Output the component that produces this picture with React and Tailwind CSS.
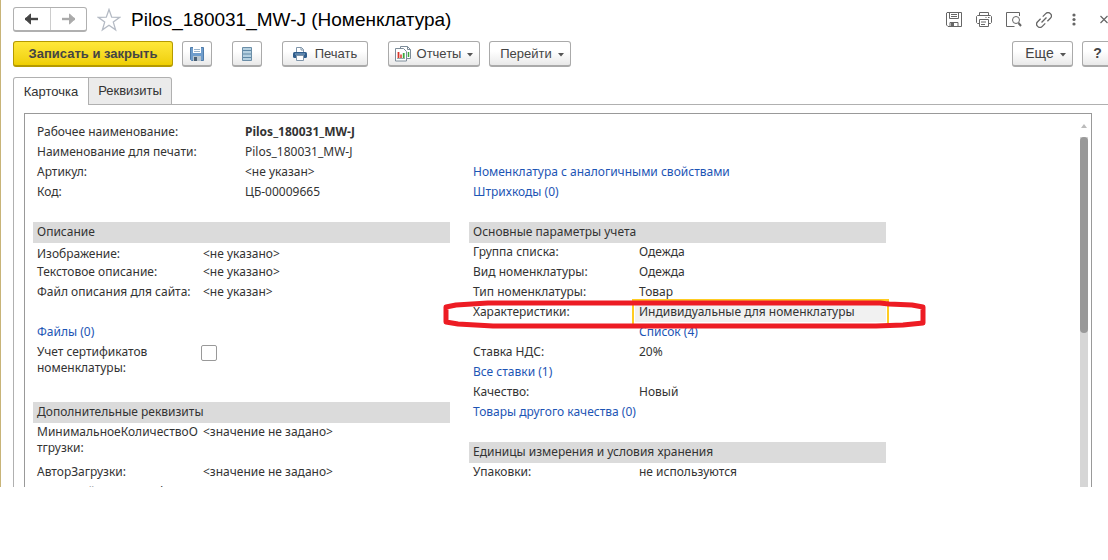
import React from "react";
import clsx from "clsx";

const topFields = [
  { label: "Рабочее наименование:", value: "Pilos_180031_MW-J", bold: true },
  { label: "Наименование для печати:", value: "Pilos_180031_MW-J" },
  { label: "Артикул:", value: "<не указан>" },
  { label: "Код:", value: "ЦБ-00009665" },
];

const buttonLook = "border-[#aaa] from-white from-40% to-[#e9e9e9] text-[#444]";
const primaryLook = "border-[#b59a00] from-[#ffe838] to-[#efcf00] font-bold text-[#444]";

function ToolButton({ primary, className, children, ...props }) {
  return (
    <button
      type="button"
      className={clsx(
        "flex h-[26px] shrink-0 items-center justify-center rounded-[3px] border border-b-2 bg-linear-to-b",
        primary ? primaryLook : buttonLook,
        className
      )}
      {...props}
    >
      {children}
    </button>
  );
}

function Caret() {
  return (
    <svg width="6" height="4" viewBox="0 0 6 4" className="mt-0.5 shrink-0" aria-hidden="true">
      <path d="M0 0h6L3 3.500z" fill="#555" />
    </svg>
  );
}

function Arrow({ color, back }) {
  return (
    <svg width="15" height="12" viewBox="0 0 15 12" className={back ? "" : "-scale-x-100"} aria-hidden="true">
      <path d="M1 6h13" stroke={color} strokeWidth="2.4" />
      <path d="M6.500 1 1.200 6l5.300 5V6z" fill={color} stroke={color} strokeWidth="1" strokeLinejoin="round" />
    </svg>
  );
}

function StarIcon() {
  return (
    <svg width="24" height="24" viewBox="0 0 24 24" fill="none" stroke="#b4bac4" strokeWidth="1.300" aria-hidden="true">
      <path d="M12 1.500l2.700 7.600 8 .2-6.400 4.800 2.300 7.700-6.600-4.600-6.600 4.600 2.300-7.700L1.300 9.300l8-.2z" />
    </svg>
  );
}

function FloppyIcon() {
  return (
    <svg width="14" height="14" viewBox="0 0 14 14" aria-hidden="true">
      <path d="M.5.5h13v13h-12l-1-1z" fill="#6f9dcc" stroke="#4f7cab" />
      <path d="M3 0h8v6H3z" fill="#fff" />
      <path d="M4 2.500h6M4 4.500h6" stroke="#9ab4cc" />
      <path d="M3 9h8v5H3z" fill="#b9c6cf" />
      <path d="M4 10h3v4H4z" fill="#4a5f73" />
    </svg>
  );
}

function ListIcon() {
  return (
    <svg width="10" height="14" viewBox="0 0 10 14" aria-hidden="true">
      <path d="M.5.5h9v13h-9z" fill="#b5d0e0" stroke="#6b8ea8" />
      <path d="M1 3.500h8M1 7h8M1 10.500h8" stroke="#5f88a6" />
    </svg>
  );
}

function PrinterIcon() {
  return (
    <svg width="14" height="14" viewBox="0 0 14 14" aria-hidden="true">
      <path d="M3.500 5V.5h5l2 2V5" fill="#fff" stroke="#7f95aa" />
      <path d="M8 .5V3h2.500" fill="none" stroke="#7f95aa" />
      <rect y="5" width="14" height="6" rx="1.500" fill="#2f5d8c" />
      <path d="M2 7h10" stroke="#8fb0cc" />
      <path d="M3.500 8.500h7v5h-7z" fill="#fff" stroke="#7f95aa" />
    </svg>
  );
}

function ReportIcon() {
  return (
    <svg width="16" height="16" viewBox="0 0 16 16" aria-hidden="true">
      <path d="M5.500.5h7l3 3v9h-10z" fill="#fff" stroke="#7d8c99" />
      <path d="M12.500.5v3h3" fill="none" stroke="#7d8c99" />
      <path d="M13.500 6v5" stroke="#3aa83a" strokeWidth="1.500" />
      <path d="M.5 2.500h8l3 3v9.500h-11z" fill="#fff" stroke="#7d8c99" />
      <path d="M3.500 6v6" stroke="#d9362b" strokeWidth="1.800" />
      <path d="M6 8.500V12" stroke="#d9362b" strokeWidth="1.500" />
      <path d="M8.700 7v5" stroke="#3aa83a" strokeWidth="1.800" />
      <path d="M2 12.500h8" stroke="#9aa" />
    </svg>
  );
}

const windowActions = [
  {
    title: "Сохранить",
    icon: (
      <>
        <path d="M1 .5h14.500v14H2L.5 13V1z" />
        <path d="M3.500.5v6h9v-6M5 2.500h6M5 4.500h6M4 14.500v-4h8v4" />
        <path d="M5 11h3v3H5z" fill="#666" stroke="none" />
      </>
    ),
  },
  {
    title: "Печать",
    icon: (
      <>
        <path d="M3.500 3.500v-3h9v3M3.500 11.500h-2l-1-1v-6l1-1h13l1 1v6l-1 1h-2" />
        <path d="M3.500 7.500h9v7h-9zM5 10h5M5 12.500h4M9.500 5.500h1M12 5.500h1.500" />
      </>
    ),
  },
  {
    title: "Просмотр",
    icon: (
      <>
        <path d="M13.500 4V.5H.5v14h8" />
        <circle cx="10" cy="8" r="3.500" />
        <path d="M12.500 11l2.500 3" strokeWidth="2" />
      </>
    ),
  },
  {
    title: "Получить ссылку",
    icon: (
      <g transform="rotate(-45 8 8)" strokeWidth="1.300">
        <path d="M6.500 4.700H2.300a3.300 3.300 0 0 0 0 6.600h4.200M9.500 4.700h4.200a3.300 3.300 0 0 1 0 6.600H9.500M4.500 8h7" />
      </g>
    ),
  },
  {
    title: "Еще действия",
    icon: (
      <g fill="#666" stroke="none">
        <circle cx="8" cy="3" r="1.600" />
        <circle cx="8" cy="7.500" r="1.600" />
        <circle cx="8" cy="12" r="1.600" />
      </g>
    ),
  },
  { title: "Закрыть", icon: <path d="M4.500 4l7 7M11.500 4l-7 7" strokeWidth="1.200" /> },
];

function SectionTitle({ children }) {
  return <h2 className="-mb-px h-[21px] bg-[#dbdbdb] px-1 leading-5">{children}</h2>;
}

function Row({ label, children, className }) {
  return (
    <div className={clsx("flex min-h-5 px-1", className)}>
      <span className="w-[166px] shrink-0">{label}</span>
      <span>{children}</span>
    </div>
  );
}

function Link({ children }) {
  return <a href="#" className="text-[#1d55b5]">{children}</a>;
}

// hand-drawn marker around the "Характеристики" row
function Marker() {
  return (
    <svg
      width="484"
      height="32"
      viewBox="0 0 484 32"
      className="pointer-events-none absolute -top-0.5 -left-[26px] z-10"
      fill="none"
      stroke="#ed1c24"
      strokeWidth="5"
      strokeLinejoin="round"
      aria-hidden="true"
    >
      <path d="M3 7l10-2 32-2h392l9 1 23 1 11 2v16l-20 2-27 1H50l-35-2-12-2z" />
    </svg>
  );
}

export default function App() {
  return (
    <div className="overflow-hidden bg-white font-['Liberation_Sans',Arial,sans-serif] text-[13px]">
      <div className="border-l border-[#c8b478] pl-3">
        <header className="-mr-1 flex h-[41px] items-center pb-0.5">
          <div className="flex h-[25px] w-[74px] rounded-[3px] border border-b-2 border-[#b0b0b0]">
            <button type="button" aria-label="Назад" className="flex flex-1 items-center justify-center border-r border-[#ccc]">
              <Arrow color="#444" back />
            </button>
            <button type="button" aria-label="Вперед" className="flex flex-1 items-center justify-center">
              <Arrow color="#aaa" />
            </button>
          </div>
          <button type="button" aria-label="В избранное" className="ml-2.5">
            <StarIcon />
          </button>
          <h1 className="ml-2.5 flex-1 text-[19px] leading-6 whitespace-nowrap text-black">Pilos_180031_MW-J (Номенклатура)</h1>
          <div className="flex gap-3.5">
            {windowActions.map((a) => (
              <button key={a.title} type="button" aria-label={a.title}>
                <svg width="16" height="16" viewBox="0 0 16 16" fill="none" stroke="#666">
                  {a.icon}
                </svg>
              </button>
            ))}
          </div>
        </header>

        <div className="-mr-[5px] flex">
          <ToolButton primary className="w-40">Записать и закрыть</ToolButton>
          <ToolButton className="ml-[9px] w-[30px]" aria-label="Записать"><FloppyIcon /></ToolButton>
          <ToolButton className="ml-5 w-[30px]" aria-label="Список"><ListIcon /></ToolButton>
          <ToolButton className="ml-5 w-[86px] gap-2"><PrinterIcon />Печать</ToolButton>
          <ToolButton className="ml-5 w-[92px] gap-1.5"><ReportIcon />Отчеты<Caret /></ToolButton>
          <ToolButton className="ml-[9px] w-[82px] gap-1.5 pl-1">Перейти<Caret /></ToolButton>
          <ToolButton className="ml-auto w-[61px] gap-1.5 pl-1.5 text-[14px]">Еще<Caret /></ToolButton>
          <ToolButton className="ml-[9px] w-[31px] text-[14px] font-bold" aria-label="Справка">?</ToolButton>
        </div>

        <div role="tablist" className="mt-2.5 flex h-7 text-[#333]">
          <button type="button" role="tab" aria-selected="true" className="w-[76px] rounded-tl-[3px] border border-b-0 border-[#b0b0b0] bg-white">
            Карточка
          </button>
          <button type="button" role="tab" aria-selected="false" className="w-[83px] rounded-tr-[3px] border border-l-0 border-[#b0b0b0] bg-[#ebebeb]">
            Реквизиты
          </button>
          <div className="flex-1 border-b border-[#b0b0b0]" />
        </div>

        <div className="border-l border-[#b0b0b0] pt-2 pr-4 pl-2.5">
          <main className="flex border border-b-0 border-[#999] pt-2 pl-2 font-['Noto_Sans',Tahoma,sans-serif] text-[12px] leading-5 text-[#333]">
            <div className="grid max-w-[853px] flex-1 grid-cols-2 gap-x-[19px]">
              <div className="mb-5 px-1">
                {topFields.map((f) => (
                  <div key={f.label} className="flex">
                    <span className="w-52 shrink-0">{f.label}</span>
                    <span className={f.bold ? "font-bold" : ""}>{f.value}</span>
                  </div>
                ))}
              </div>
              <div className="flex flex-col items-start px-1 pt-10">
                <Link>Номенклатура с аналогичными свойствами</Link>
                <Link>Штрихкоды (0)</Link>
              </div>

              <section>
                <SectionTitle>Описание</SectionTitle>
                <Row label="Изображение:" className="items-end leading-4">{"<не указано>"}</Row>
                <Row label="Текстовое описание:">{"<не указано>"}</Row>
                <Row label="Файл описания для сайта:">{"<не указан>"}</Row>
                <div className="mt-5 px-1"><Link>Файлы (0)</Link></div>
                <div className="mb-6 flex px-1 pt-0.5">
                  <label htmlFor="cert" className="w-[164px] pr-8 pb-0.5 leading-4">Учет сертификатов номенклатуры:</label>
                  <input id="cert" type="checkbox" className="mt-px size-4 appearance-none rounded-[2px] border border-[#999] bg-white" />
                </div>
                <SectionTitle>Дополнительные реквизиты</SectionTitle>
                <Row label={<>МинимальноеКоличествоО<br />тгрузки:</>} className="pt-0.5 pb-1.5 leading-4">{"<значение не задано>"}</Row>
                <Row label="АвторЗагрузки:">{"<значение не задано>"}</Row>
                <div className="h-[5px] overflow-hidden px-1">ОсновнойКодКлассификации:</div>
              </section>

              <section>
                <SectionTitle>Основные параметры учета</SectionTitle>
                <Row label="Группа списка:">Одежда</Row>
                <Row label="Вид номенклатуры:">Одежда</Row>
                <Row label="Тип номенклатуры:">Товар</Row>
                <div className="relative flex h-5 pl-1">
                  <label htmlFor="features" className="w-[159px] shrink-0">Характеристики:</label>
                  <div className="-mt-[3px] -mr-[3px] h-[27px] flex-1 border-2 border-[#fc2] bg-white p-px">
                    <input id="features" type="text" readOnly value="Индивидуальные для номенклатуры" className="block h-5 w-full bg-[#f1f1f1] pl-1 leading-5 outline-none" />
                  </div>
                  <Marker />
                </div>
                <Row label=""><Link>Список (4)</Link></Row>
                <Row label="Ставка НДС:">20%</Row>
                <Row label={<Link>Все ставки (1)</Link>} />
                <Row label="Качество:">Новый</Row>
                <div className="mb-5 px-1"><Link>Товары другого качества (0)</Link></div>
                <SectionTitle>Единицы измерения и условия хранения</SectionTitle>
                <Row label="Упаковки:">не используются</Row>
              </section>
            </div>

            <div className="mr-[3px] ml-auto flex w-2 flex-col items-center" aria-hidden="true">
              <svg width="6" height="4" viewBox="0 0 6 4" className="mt-0.5 mb-[9px]">
                <path d="M3 0l3 4H0z" fill="#bbb" />
              </svg>
              <div className="w-full flex-1 bg-[#d6d6d6]">
                <div className="h-49 rounded-full bg-[#999]" />
              </div>
            </div>
          </main>
        </div>
      </div>
    </div>
  );
}
